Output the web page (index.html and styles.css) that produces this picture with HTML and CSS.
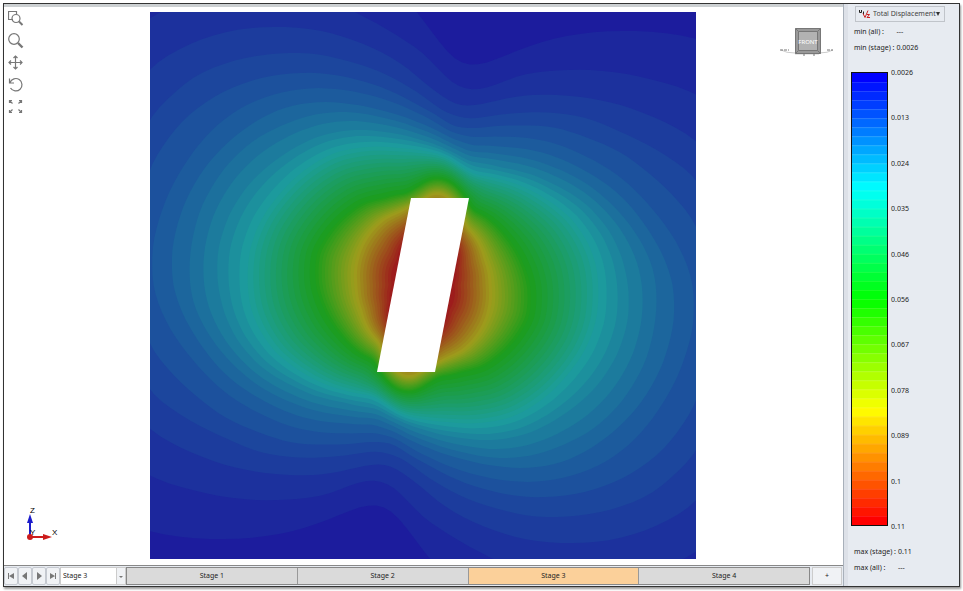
FILE: index.html
```html
<!DOCTYPE html>
<html lang="en">
<head>
<meta charset="utf-8">
<title>Total Displacement</title>
<link rel="stylesheet" href="styles.css">
</head>
<body>
<div class="app">
  <main class="workspace">
    <section class="viewport" aria-label="Model view">
      <div class="tools">
        <button type="button" aria-label="Zoom window"><svg viewBox="0 0 16 16"><path d="M5 8.500H.5V.5h8V3"/><circle cx="8" cy="7.500" r="4"/><path d="m11 10.500 3.500 3.500" stroke-width="2"/></svg></button>
        <button type="button" aria-label="Zoom"><svg viewBox="0 0 16 16"><circle cx="6" cy="6" r="5.300"/><path d="m10 10 4.500 4.500" stroke-width="2.400"/></svg></button>
        <button type="button" aria-label="Pan"><svg viewBox="0 0 16 16"><path d="M7.500 1v13M1 7.500h13M5.500 3l2-2 2 2M5.500 12l2 2 2-2M3 5.500l-2 2 2 2M12 5.500l2 2-2 2"/></svg></button>
        <button type="button" aria-label="Rotate"><svg viewBox="0 0 16 16"><path d="M2 5.500A6.200 6.200 0 1 1 2.500 11M1.500 1.500v4.500h4.500"/></svg></button>
        <button type="button" aria-label="Zoom all"><svg viewBox="0 0 16 16"><path d="M1.500 4V1.500H4M1.500 1.500l3 3M11 1.500h2.500V4M13.500 1.500l-3 3M1.500 11v2.500H4M1.500 13.500l3-3M11 13.500h2.500V11M13.500 13.500l-3-3"/></svg></button>
      </div>
      <svg class="plot" id="plot" viewBox="150 12 546 547" role="img" aria-label="Displacement contours"></svg>
      <svg class="cube" viewBox="0 0 56 30" role="img" aria-label="Front view">
        <path class="ring" d="M2 23q5 3 14 3M54 23q-5 3-14 3M16 27h24"/>
        <path class="ring dark" d="M1 23h9M48 23h6M24 28h2M34 28h2"/>
        <path fill="#999" stroke="#777" d="M16.500 1.500h25v25h-25z"/>
        <path fill="#b2b2b2" stroke="#777" d="M19.500 4.500h19v19h-19z"/>
        <path stroke="#777" d="m16.500 1.500 3 3m22-3-3 3m-22 22 3-3m22 3-3-3"/>
        <text x="29" y="17" text-anchor="middle">FRONT</text>
      </svg>
      <svg class="axes" viewBox="0 0 36 40" role="img" aria-label="Axes">
        <path stroke="#1c1ccc" stroke-width="2" d="M6 30V15"/><path fill="#1c1ccc" d="m6 7 3 9H3z"/>
        <path stroke="#cc1c1c" stroke-width="2" d="M6 30h14"/><path fill="#cc1c1c" d="m28 30-9 3v-6z"/>
        <circle cx="6" cy="30" r="3" fill="#cc1c1c"/>
        <text x="6" y="6">Z</text><text x="6" y="28">Y</text><text x="28" y="28">X</text>
      </svg>
    </section>
    <footer class="stagebar">
      <button class="nav" type="button" aria-label="First stage"><svg viewBox="0 0 8 8"><path d="M1 1h1v6H1zM7 1v6L2 4z"/></svg></button>
      <button class="nav" type="button" aria-label="Previous stage"><svg viewBox="0 0 8 8"><path d="M6 0v8L1 4z"/></svg></button>
      <button class="nav" type="button" aria-label="Next stage"><svg viewBox="0 0 8 8"><path d="M2 0v8l5-4z"/></svg></button>
      <button class="nav" type="button" aria-label="Last stage"><svg viewBox="0 0 8 8"><path d="M6 1h1v6H6zM1 1v6l5-3z"/></svg></button>
      <div class="pick"><select aria-label="Current stage"><option>Stage 3</option></select><span class="caret"></span></div>
      <div class="stages">
        <button type="button">Stage 1</button>
        <button type="button">Stage 2</button>
        <button type="button" class="active">Stage 3</button>
        <button type="button">Stage 4</button>
      </div>
      <button class="add" type="button" aria-label="Add stage">+</button>
    </footer>
  </main>
  <aside class="legend">
    <div class="result">
      <svg viewBox="0 0 14 12"><path stroke="#222" d="M1.500 2v2.500h2V2M5.500 3.500V6"/><path stroke="#c22" d="m5 5.500 2 4 3-7M9 6.500h2.500l-2.500 3h3"/></svg>
      <select aria-label="Result"><option>Total Displacement</option></select><span class="caret"></span>
    </div>
    <dl class="range">
      <dt>min (all) :</dt><dd>---</dd>
      <dt>min (stage) :</dt><dd>0.0026</dd>
    </dl>
    <div class="scale">
      <svg class="bar" id="bar" viewBox="0 0 10 50" preserveAspectRatio="none" aria-hidden="true"></svg>
      <ol class="ticks">
        <li>0.0026</li><li>0.013</li><li>0.024</li><li>0.035</li><li>0.046</li><li>0.056</li><li>0.067</li><li>0.078</li><li>0.089</li><li>0.1</li><li>0.11</li>
      </ol>
    </div>
    <dl class="range">
      <dt>max (stage) :</dt><dd>0.11</dd>
      <dt>max (all) :</dt><dd>---</dd>
    </dl>
  </aside>
</div>
<script src="contours.js"></script>
</body>
</html>
```
FILE: styles.css
```css
* { box-sizing: border-box; }
body { margin: 0; padding: 3px 3px 4px; height: 100vh; background: #fff; font: 7px/16px "Noto Sans", sans-serif; color: #222; }
button, select { font: inherit; color: inherit; margin: 0; padding: 0; border: 0; background: none; appearance: none; }
dl, dd, ol { margin: 0; padding: 0; list-style: none; }

.app { display: flex; height: 100%; border: 1px solid #333; background: #e7ebf1; box-shadow: 1px 2px 2px #999; }
.workspace { flex: 1; min-width: 0; display: flex; flex-direction: column; border-right: 1px solid #a8b0ba; }
.viewport { position: relative; flex: 1; min-height: 0; display: flex; justify-content: center; padding: 5px 2px 6px 0; border-top: 3px solid #ccd0d2; background: #fff; }
.plot { height: 100%; aspect-ratio: 546 / 547; }

.tools { position: absolute; left: 4px; top: 4px; display: flex; flex-direction: column; gap: 6px; }
.tools button { width: 16px; height: 16px; display: block; }
.tools svg { display: block; fill: none; stroke: #777; stroke-width: 1.2; }
.cube { position: absolute; right: 8px; top: 20px; width: 56px; height: 30px; fill: none; }
.cube .ring { stroke: #ccc; }
.cube .dark { stroke: #777; stroke-dasharray: 3 1; }
.cube text { fill: #fff; font-size: 6px; }
.axes { position: absolute; left: 20px; bottom: 18px; width: 36px; height: 40px; font: 8px "Liberation Sans", sans-serif; }

.stagebar { display: flex; height: 21px; padding: 1px 1px 1px 0; border-top: 1px solid #888; }
.nav { width: 14px; border: 1px solid #c5c9d0; border-radius: 2px; background: #f0f2f5; display: grid; place-items: center; }
.nav svg { width: 8px; height: 8px; fill: #777; }
.pick { position: relative; width: 66px; background: #fff; border: 1px solid #ccc; }
.pick select { width: 100%; height: 100%; padding-left: 2px; }
.caret { position: absolute; pointer-events: none; }
.pick .caret { right: 0; top: 0; bottom: 0; width: 9px; border-left: 1px solid #ccc; background: #f0f2f5; }
.pick .caret::after { content: ""; position: absolute; left: 2px; top: 8px; border: 2px solid transparent; border-top-color: #777; }
.stages { flex: 1; display: flex; border: 1px solid #888; }
.stages button { flex: 1; background: #dadada; border-right: 1px solid #999; }
.stages button:last-child { border-right: 0; }
.stages .active { background: #fbd09a; }
.add { width: 30px; margin-left: 2px; background: #f0f2f5; border: 1px solid #ccc; }

.legend { width: 115px; display: flex; flex-direction: column; border-left: 4px solid #dde1e8; padding: 2px 0 10px 3px; }
.result { position: relative; display: flex; align-items: center; gap: 1px; width: 90px; height: 16px; margin-left: 4px; padding-left: 2px; border: 1px solid #c0c4ca; }
.result svg { flex: none; width: 14px; height: 12px; fill: none; }
.result select { flex: 1; min-width: 0; color: #444; }
.result .caret { right: 4px; top: 5px; border: 2px solid transparent; border-top: 4px solid #333; }
.range { display: grid; grid-template-columns: max-content 1fr; column-gap: 2px; padding: 2px 0 0 3px; }
.scale { flex: 1; min-height: 0; display: flex; margin: 16px 0; }
.bar { width: 37px; height: 100%; border: 1px solid #111; }
.ticks { display: flex; flex-direction: column; justify-content: space-between; margin: -7px 0 -9px 3px; }
```
FILE: contours.js
```js
const NS = "http://www.w3.org/2000/svg";
const BANDS = 50;
const CX = 423, CY = 285;

// Upper half of each key contour; the field is point-symmetric about the centre.
const keys = [
  [1, "-4,285 20,120 120,-40 250,-80 350,-50 400,-8 420,17 437,40 453,60 472,67 492,62 520,50 553,39 587,33 620,31 653,32 695,38 770,70 830,150"],
  [2, "43,285 60,150 130,30 230,-15 320,-5 353,12 383,27 403,40 420,50 437,68 453,85 472,91 493,87 520,75 553,71 587,70 620,73 653,80 695,93 760,140 795,210"],
  [3, "93,285 100,170 150,67 183,47 217,34 250,28 283,27 317,30 350,39 383,53 410,70 420,80 437,93 453,104 470,107 493,102 520,96 553,95 587,98 620,105 653,117 695,139 735,190 750,240"],
  [4, "124,285 130,180 150,117 167,100 193,77 217,66 250,57 283,53 317,54 350,62 383,73 410,88 420,94 440,110 460,118 473,119 487,117 520,113 553,113 587,118 620,132 653,148 695,177 715,215 722,250"],
  [5, "138,285 140,220 150,167 183,120 217,95 250,81 283,74 317,73 350,78 383,88 417,105 453,127 473,129 487,127 520,126 553,127 587,138 620,152 653,177 680,203 695,223 705,250"],
  [6, "153,285 153,243 167,197 183,167 200,143 223,120 250,103 283,92 317,88 350,91 383,99 417,113 450,132 472,138 503,137 553,143 587,157 620,177 653,210 677,243 689,270"],
  [7, "173,285 172,250 183,207 203,170 223,147 250,125 283,108 317,102 350,104 383,111 417,122 450,138 472,146 503,147 553,156 587,172 620,195 647,228 665,260"],
  [8, "190,285 190,255 200,210 223,170 250,143 283,125 317,114 350,112 383,118 417,128 450,143 470,152 503,155 553,167 587,184 620,213 640,240 652,265"],
  [10, "218,285 218,250 230,213 250,183 283,155 317,137 350,130 383,132 417,139 450,151 470,162 503,168 553,184 587,205 610,232 622,258"],
  [12.5, "245,285 247,250 258,220 277,193 303,168 333,151 365,145 395,146 420,149 445,155 462,166 475,174 505,179 545,196 575,219 592,245 599,265"],
  [25, "316,285 317,253 337,223 363,203 383,198 407,193 418,186 430,179 440,178 450,181 460,190 468,201 473,210 487,217 507,237 523,263"],
  [37.5, "356,285 358,257 367,237 383,220 400,212 412,206 422,201 430,195 438,193 446,196 455,204 462,216 467,228 477,240 485,260"],
  [50, "395,285 399,262 408,240 418,228 437,222 446,226 452,236 456,252 454,270"]
].map(([level, text]) => ({ level, radii: toRadii(text) }));

function toRadii(text) {
  const pts = text.split(" ").map(p => {
    const [x, y] = p.split(",").map(Number);
    return { a: 180 - Math.atan2(CY - y, x - CX) * 180 / Math.PI, r: Math.hypot(x - CX, y - CY) };
  }).sort((p, q) => p.a - q.a);
  pts.push({ a: 180, r: pts[0].r });
  let radii = [];
  for (let a = 0; a < 180; a += 2) {
    let i = 0;
    while (pts[i + 1].a < a) i++;
    const p = pts[i], q = pts[i + 1];
    radii.push(p.r + (q.r - p.r) * (a - p.a) / (q.a - p.a || 1));
  }
  for (let pass = 0; pass < 2; pass++) {
    const n = radii.length;
    radii = radii.map((r, i) => (radii[(i + n - 1) % n] + 2 * r + radii[(i + 1) % n]) / 4);
  }
  return radii;
}

function contour(level) {
  const j = keys.findIndex(k => k.level >= level);
  const hi = keys[j], lo = keys[Math.max(0, j - 1)];
  const t = hi === lo ? 0 : (level - lo.level) / (hi.level - lo.level);
  const half = lo.radii.map((r, i) => r + (hi.radii[i] - r) * t);
  return half.concat(half).map((r, i) => {
    const a = (180 - i * 2) * Math.PI / 180;
    return (CX + r * Math.cos(a)).toFixed(1) + "," + (CY - r * Math.sin(a)).toFixed(1);
  }).join(" ");
}

function color(t, low, high) {
  const q = Math.min(3, Math.floor(t * 4));
  const f = t * 4 - q;
  const rgb = [[0, f, 1], [0, 1, 1 - f], [f, 1, 0], [1, 1 - f, 0]][q];
  return "rgb(" + rgb.map(v => Math.round(low + (high - low) * v)).join(",") + ")";
}

function add(parent, tag, attrs) {
  const el = document.createElementNS(NS, tag);
  for (const name in attrs) el.setAttribute(name, attrs[name]);
  parent.appendChild(el);
}

const plot = document.getElementById("plot");
add(plot, "rect", { x: 150, y: 12, width: 546, height: 547, fill: color(0, 28, 157) });
for (let k = 1; k <= BANDS; k++) {
  add(plot, "polygon", { points: contour(k), fill: color(Math.min(1, k / (BANDS - 1)), 28, 157) });
}
add(plot, "polygon", { points: "411,198 469,198 435,372 377,372", fill: "#fff" });

const bar = document.getElementById("bar");
for (let k = 0; k < BANDS; k++) {
  add(bar, "rect", { x: 0, y: k, width: 10, height: 1.05, fill: color(k / (BANDS - 1), 0, 255) });
}
for (let k = 1; k < BANDS; k++) {
  add(bar, "rect", { x: 0, y: k, width: 10, height: 0.1, fill: "#fff", opacity: 0.12 });
}
```
